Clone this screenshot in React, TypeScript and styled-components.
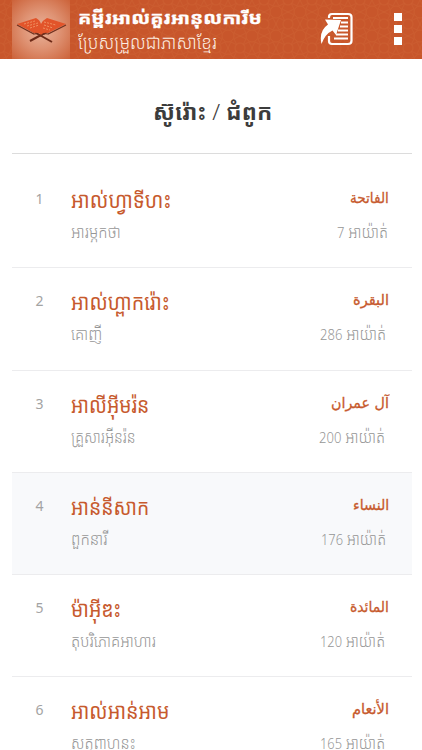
import React, { useLayoutEffect, useRef } from "react";
import styled, { createGlobalStyle } from "styled-components";

const GlobalStyle = createGlobalStyle`
  * { box-sizing: border-box; }
  html, body { margin: 0; background: #fff; overflow: hidden; }
  body { font-family: "Noto Sans", "Noto Sans Khmer", "Khmer OS", "Open Sans", sans-serif; }
`;

const Page = styled.div`
  width: 422px;
  height: 750px;
  overflow: hidden;
  background: #fff;
`;

const Header = styled.header`
  position: relative;
  display: flex;
  height: 59px;
  overflow: hidden;
  background: #c8562b;
`;

const Pattern = styled.svg`
  position: absolute;
  inset: 0;
  width: 100%;
  height: 100%;
`;

const Logo = styled.div`
  position: relative;
  flex: none;
  width: 58px;
  height: 59px;
  margin-left: 12px;
  background: radial-gradient(circle at 50% 50%, #e9b49c 0%, #df9374 45%, #cc6239 100%);
  svg { display: block; }
`;

const Brand = styled.div`
  position: relative;
  flex: none;
  width: 230px;
  height: 59px;
  padding: 5px 0 0 8px;
  color: #fff;
`;

const BrandName = styled.div`
  height: 25px;
  font-size: 16px;
  line-height: 27px;
  font-weight: 700;
  -webkit-text-stroke: 0.3px #fff;
`;

const BrandSub = styled.div`
  height: 24px;
  font-size: 19px;
  line-height: 24px;
  font-weight: 300;
  color: #fdeee2;
`;

const Actions = styled.div`
  position: relative;
  display: flex;
  align-items: flex-start;
  flex: 1;
  padding: 12px 0 0 20px;
  gap: 41px;
`;

const Dots = styled.div`
  display: grid;
  gap: 4px;
  padding-top: 1px;
  i { display: block; width: 8px; height: 8px; background: #fff; }
`;

const Content = styled.main`
  padding: 0 10px 0 12px;
`;

const Title = styled.h1`
  display: flex;
  justify-content: center;
  height: 95px;
  margin: 0 0 12px;
  padding: 37px 0 0;
  border-bottom: 1px solid #dcdcdc;
  color: #3c3c3c;
  font-size: 22px;
  line-height: 30px;
  font-weight: 700;
  i { font-style: normal; font-weight: 300; }
`;

const Row = styled.article<{ $active?: boolean }>`
  display: grid;
  grid-template-columns: 59px 1fr auto;
  height: 102.3px;
  padding: 17px 23px 0 0;
  border-bottom: 1px solid #ececee;
  background: ${(p) => (p.$active ? "#f8f9fb" : "#fff")};
`;

const Num = styled.div`
  padding-left: 23.5px;
  font-size: 14px;
  line-height: 32px;
  color: #a3a3a3;
  font-family: "Noto Sans", sans-serif;
`;

const Name = styled.div`
  height: 34px;
  font-size: 22.5px;
  line-height: 33px;
  color: #c75a2e;
`;

const Meaning = styled.div<{ $inset?: number }>`
  height: 32px;
  padding-right: ${(p) => p.$inset ?? 0}px;
  font-size: 17px;
  line-height: 30px;
  font-weight: 300;
  color: #969696;
`;

const Side = styled.div`
  display: flex;
  flex-direction: column;
  align-items: flex-end;
`;

const Arabic = styled.div`
  height: 34px;
  font-family: "DejaVu Sans", sans-serif;
  font-size: 15px;
  line-height: 30px;
  color: #c75a2e;
  -webkit-text-stroke: 0.3px #c75a2e;
`;

const Count = styled.span`
  font-size: 15px;
`;

const FitBox = styled.span`
  display: block;
  white-space: nowrap;
`;

const FitInner = styled.span`
  display: inline-block;
  transform-origin: left center;
`;

/* Condenses or widens a single line so it fills the given width. */
function Fit({ width, children, dir }: { width: number; children: React.ReactNode; dir?: string }) {
  const ref = useRef<HTMLSpanElement>(null);
  useLayoutEffect(() => {
    const apply = () => {
      const el = ref.current;
      if (el && el.offsetWidth) el.style.transform = `scaleX(${width / el.offsetWidth})`;
    };
    apply();
    document.fonts?.ready.then(apply);
  }, [width]);
  return (
    <FitBox style={{ width }}>
      <FitInner ref={ref} dir={dir}>{children}</FitInner>
    </FitBox>
  );
}

const rows = [
  { name: "អាល់ហ្វាទីហះ", nw: 100, sub: "អារម្ភកថា", sw: 50, ar: "الفاتحة", aw: 39, n: "7", cw: 51, inset: 1 },
  { name: "អាល់ហ្ពាករ៉ោះ", nw: 99, sub: "គោញី", sw: 31, ar: "البقرة", aw: 36, n: "286", cw: 66, inset: 3 },
  { name: "អាលីអ៊ីមរ៉ន", nw: 78, sub: "គ្រួសារអ៊ីនរ៉ន", sw: 65, ar: "آل عمران", aw: 58, n: "200", cw: 66, inset: 4 },
  { name: "អាន់នីសាក", nw: 78, sub: "ពួកនារី", sw: 37, ar: "النساء", aw: 36, n: "176", cw: 65, inset: 3 },
  { name: "ម៉ាអ៊ីឌះ", nw: 50, sub: "តុបរិភោគអាហារ", sw: 85, ar: "المائدة", aw: 39, n: "120", cw: 65, inset: 4 },
  { name: "អាល់អាន់អាម", nw: 98, sub: "សត្វពាហនះ", sw: 65, ar: "الأنعام", aw: 37, n: "165", cw: 65, inset: 4 },
];

const BookLogo = () => (
  <svg width="58" height="59" viewBox="0 0 58 59">
    <path d="M18 41L42 28M40 42L17 29" stroke="#6d2a17" strokeWidth="2" fill="none" />
    <path d="M5 24L24 18Q28 20 29 24Q31 20 35 18L54 24L36 33Q31 32 29 35Q27 32 22 33Z" fill="#e2542a" />
    <path d="M5 25L22 34Q27 33 29 36Q31 33 36 34L54 25" fill="none" stroke="#70301e" strokeWidth="1.2" />
    <path d="M12 24l11-3M15 26l11-3M18 28l9-3M32 22l12 3M32 25l9 3M31 28l7 2" stroke="#f2a06f" strokeWidth="0.8" strokeDasharray="2 1.2" />
  </svg>
);

const ReadIcon = () => (
  <svg width="33" height="34" viewBox="0 0 33 34">
    <path d="M9 6V5Q9 2 12 2H28Q31.5 2 31.5 5V29Q31.5 32 28 32H12Q9 32 9 29V24" fill="none" stroke="#fff" strokeWidth="2.2" />
    <path d="M13 6H28M21 10.5H28M20 14.5H28M18 18.5H28M16 22.5H28M14 26.5H28" stroke="#fff" strokeWidth="1.8" />
    <path d="M5 7.5L21 8L16 23L12.5 18.5Q5 22 1.5 32Q-1.5 19 8 12.5Z" fill="#fff" />
  </svg>
);

export default function App() {
  return (
    <Page>
      <GlobalStyle />
      <Header>
        <Pattern>
          <defs>
            <pattern id="motif" width="24" height="24" patternUnits="userSpaceOnUse">
              <g fill="none" stroke="#d8753f" strokeWidth="0.8" opacity="0.28">
                <circle cx="12" cy="12" r="6" />
                <path d="M12 0l3 6 6-3-3 6 6 3-6 3 3 6-6-3-3 6-3-6-6 3 3-6-6-3 6-3-3-6 6 3z" />
                <circle cx="0" cy="0" r="5" /><circle cx="24" cy="24" r="5" />
                <circle cx="24" cy="0" r="5" /><circle cx="0" cy="24" r="5" />
              </g>
            </pattern>
          </defs>
          <rect width="100%" height="100%" fill="url(#motif)" />
        </Pattern>
        <Logo><BookLogo /></Logo>
        <Brand>
          <BrandName><Fit width={184}>គម្ពីរអាល់គួរអានុលការីម</Fit></BrandName>
          <BrandSub><Fit width={139}>ប្រែសម្រួលជាភាសាខ្មែរ</Fit></BrandSub>
        </Brand>
        <Actions>
          <ReadIcon />
          <Dots><i /><i /><i /></Dots>
        </Actions>
      </Header>
      <Content>
        <Title><Fit width={119}>ស៊ូរ៉ោះ <i>/</i> ជំពូក</Fit></Title>
        {rows.map((r, i) => (
          <Row key={i} $active={i === 3}>
            <Num>{i + 1}</Num>
            <div>
              <Name><Fit width={r.nw}>{r.name}</Fit></Name>
              <Meaning><Fit width={r.sw}>{r.sub}</Fit></Meaning>
            </div>
            <Side>
              <Arabic><Fit width={r.aw} dir="rtl">{r.ar}</Fit></Arabic>
              <Meaning $inset={r.inset}><Fit width={r.cw}><Count>{r.n}</Count> អាយ៉ាត់</Fit></Meaning>
            </Side>
          </Row>
        ))}
      </Content>
    </Page>
  );
}
